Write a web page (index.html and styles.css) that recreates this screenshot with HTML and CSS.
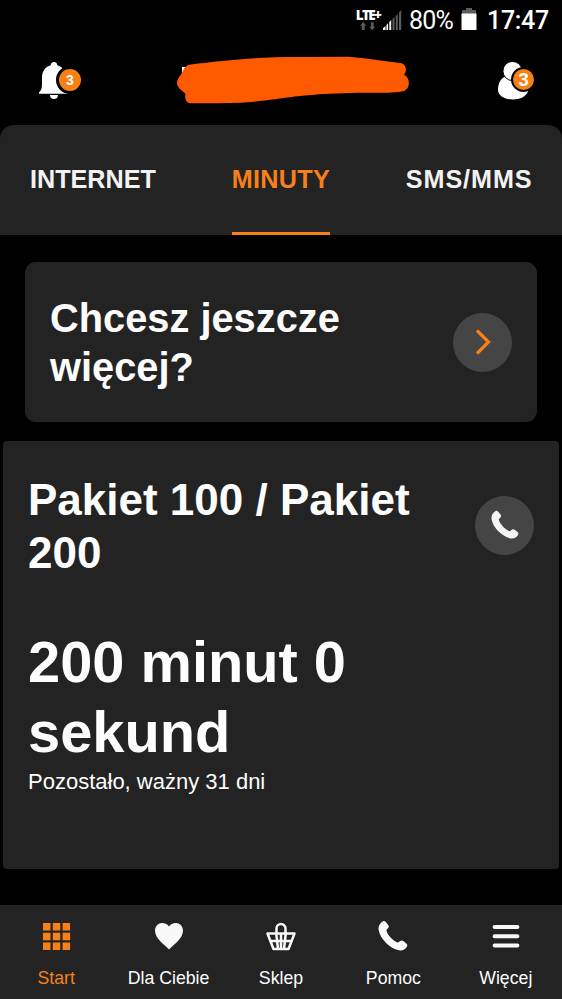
FILE: index.html
```html
<!DOCTYPE html>
<html lang="pl">
<head>
<meta charset="utf-8">
<title>Minuty</title>
<link rel="stylesheet" href="styles.css">
</head>
<body>
<div class="screen">
  <div class="status">
    <div class="network">
      <span class="lte">LTE+</span>
      <svg width="16" height="9" viewBox="0 0 16 9" fill="#5c5c5c"><path d="M3.200 0 6.200 3.500H4.600V8H1.800V3.500H.2zM12.300 8.300 9.300 4.800h1.600V.3h2.800v4.500h1.600z"/></svg>
    </div>
    <svg class="signal" width="22" height="22" viewBox="0 0 22 22"><path fill="#fff" d="M1 21v-2l2.500-2V21zM4.400 21v-5l1.700-1.700V21zM7.300 21v-8l1.900-1.900V21z"/><path fill="#5c5c5c" d="M10.500 21V10l2-2v13zM13.800 21V7l2-2v16zM17 21V3.500L19.200 1v20z"/></svg>
    <span class="percent">80%</span>
    <svg class="battery" width="16" height="24" viewBox="0 0 16 24"><path fill="#5c5c5c" d="M5 1h6v2h4v4H1V3h4z"/><path fill="#fff" d="M.5 6.500h15V23H.5z"/></svg>
    <span class="clock">17:47</span>
  </div>

  <header class="header">
    <div class="alert">
      <svg width="32" height="40" viewBox="0 0 32 40" fill="#fff"><path d="M16 1c2 0 3.500 1.300 3.200 3.200C25 6 28 10 28 17v7c0 3 1 5.500 2.500 7.500v1.200H1v-1.200C3 29.500 4 27 4 24v-7c0-7 3-11 8.800-12.800C12.500 2.300 14 1 16 1zM12 34h8c0 2.500-1.500 4-4 4s-4-1.500-4-4z"/></svg>
      <span class="badge">3</span>
    </div>
    <svg class="name" width="234" height="50" viewBox="0 0 234 50"><path fill="#fff" d="M6 10h6v26l-6-5z"/><path fill="#ff5a00" d="M15 7.500C45 3.500 82 0 120 0L171-.2C190 1 210 4.500 224 6c7 1 7 8 4 12 6 2 7 13 0 16-12 3-35 1-60 2.300C125 37 108 42 75 45c-20 1.500-38 1.200-60 1.200-5 0-6.500-5-5.500-9.200C6 33 1 31 1 26c0-5 4-7 6-12.500 1.500-3 4-6 8-6z"/></svg>
    <div class="user">
      <svg width="34" height="40" viewBox="0 0 34 40" fill="#fff"><path d="M1 29c0-7 3-12 7.500-13.500C11 19.500 20 20 23 16c5 2 8 7 8 14.500-2 5-8 8-15 8-8.500 0-15-4-15-9.500z"/><circle cx="15.500" cy="10" r="9.600" stroke="#000" stroke-width="1"/></svg>
      <span class="badge badge-large">3</span>
    </div>
  </header>

  <nav class="tabs">
    <span class="tab">INTERNET</span>
    <span class="tab active">MINUTY</span>
    <span class="tab messages">SMS/MMS</span>
  </nav>

  <section class="promo">
    <h2>Chcesz jeszcze<br>więcej?</h2>
    <span class="round"><svg width="20" height="30" viewBox="0 0 20 30" fill="none" stroke="#f8801a" stroke-width="3.200"><path d="M4 3.500 15.500 15 4 26.500"/></svg></span>
  </section>

  <main class="package">
    <div class="package-head">
      <h1>Pakiet 100 / Pakiet<br>200</h1>
      <span class="round"><svg width="30" height="30" viewBox="0 0 30 30" fill="#f4f4f4"><use href="#phone"/></svg></span>
    </div>
    <p class="amount">200 minut 0<br>sekund</p>
    <p class="left">Pozostało, ważny 31 dni</p>
  </main>

  <nav class="bottom">
    <a class="item current">
      <svg width="32" height="32" viewBox="0 0 32 32" fill="#f8801a"><path d="M3 3h7.500v7.500H3zM12.800 3h7.500v7.500h-7.500zM22.600 3h7.500v7.500h-7.500zM3 12.800h7.500v7.500H3zM12.800 12.800h7.500v7.500h-7.500zM22.600 12.800h7.500v7.500h-7.500zM3 22.600h7.500v7.500H3zM12.800 22.600h7.500v7.500h-7.500zM22.600 22.600h7.500v7.500h-7.500z"/></svg>
      <span>Start</span>
    </a>
    <a class="item">
      <svg width="32" height="32" viewBox="0 0 32 32" fill="#f8f8f8"><path d="M16 29.500C12 25 2 19 2 10.500 2 6 5.500 3 9 3c3.200 0 5.700 1.300 7 3.500C17.300 4.300 19.800 3 23 3c3.500 0 7 3 7 7.500 0 8.500-10 14.500-14 19z"/></svg>
      <span>Dla Ciebie</span>
    </a>
    <a class="item">
      <svg width="32" height="32" viewBox="0 0 32 32" fill="none" stroke="#f8f8f8" stroke-width="2.500" stroke-linejoin="round"><path d="M2.500 13.500h27L23.500 29h-15zM5.500 21h21M11.300 14l1.700 15M20.700 14 19 29M16 14v15" /><path d="M11.500 13.500V8.500a4.500 4.500 0 0 1 9 0v5"/></svg>
      <span>Sklep</span>
    </a>
    <a class="item">
      <svg width="32" height="32" viewBox="0 0 30 30" fill="#f8f8f8"><path id="phone" d="M5.300 1.300C6.300.6 7.200.8 8 1.600l2.500 3c.8 1 .8 2-.1 2.900L8.800 9.300c.5 4.500 6.400 10.400 11 11.900l2-1.500c1-.7 2-.6 2.900.1l3 2.500c.9.800 1 1.600.3 2.700C26.500 27.500 24 29 20.500 28.400 12 26.500 3.300 18 1.600 9.500 1 5.500 2.700 2.900 5.300 1.300z"/></svg>
      <span>Pomoc</span>
    </a>
    <a class="item">
      <svg width="32" height="32" viewBox="0 0 32 32" stroke="#f8f8f8" stroke-width="4" stroke-linecap="round"><path d="M4.600 7h22.800M4.600 16.300h22.800M4.600 25.600h22.800"/></svg>
      <span>Więcej</span>
    </a>
  </nav>
</div>
</body>
</html>
```
FILE: styles.css
```css
* { box-sizing: border-box; margin: 0; padding: 0; }

body {
  background: #000;
  color: #fdfdfd;
  font-family: "Liberation Sans", sans-serif;
}

.screen {
  width: 562px;
  height: 999px;
  display: flex;
  flex-direction: column;
  overflow: hidden;
  background: #000;
}

.status {
  height: 40px;
  padding-right: 13px;
  display: flex;
  align-items: center;
  justify-content: flex-end;
  font-family: Roboto, sans-serif;
  font-size: 25px;
}

.network {
  width: 24px;
  margin-right: 2px;
  display: flex;
  flex-direction: column;
  align-items: center;
}

.lte {
  font: 800 13.500px/13px "Open Sans", sans-serif;
  letter-spacing: -1.600px;
}

.signal { margin-right: 5px; }
.percent { width: 46px; letter-spacing: -.8px; }
.battery { margin: -2px 10px 0 6px; }
.clock { width: 62px; font-weight: 500; letter-spacing: -.3px; }

.header {
  height: 85px;
  padding: 17px 25px 0 38px;
  display: flex;
  align-items: flex-start;
  justify-content: space-between;
}

.alert, .user { position: relative; }
.alert { padding-top: 4px; width: 44px; }
.user { padding-top: 4px; width: 40px; }
.name { overflow: visible; margin-left: 7px; }

.badge {
  position: absolute;
  left: 18px;
  top: 9px;
  width: 28px;
  height: 28px;
  border: 3px solid #000;
  border-radius: 50%;
  background: #f98012;
  font: bold 14px/22px "Liberation Sans", sans-serif;
  text-align: center;
}

.badge-large {
  left: 14px;
  top: 10px;
  width: 25px;
  height: 25px;
  border-width: 2px;
  font-size: 19px;
}

.tabs {
  height: 110px;
  padding: 0 30px;
  display: flex;
  justify-content: space-between;
  border-radius: 14px 14px 0 0;
  background: #232323;
}

.tab {
  border-bottom: 3px solid transparent;
  font-size: 25.200px;
  font-weight: bold;
  line-height: 109px;
  color: #f2f2f2;
}

.tab.active { color: #f8801a; border-color: #f8801a; letter-spacing: .3px; }
.tab.messages { letter-spacing: .9px; margin-right: -.5px; }

.promo {
  height: 160px;
  margin: 27px 25px 19px;
  padding: 0 25px;
  display: flex;
  align-items: center;
  justify-content: space-between;
  border-radius: 11px;
  background: #232323;
}

.promo h2 { padding-top: 2px; font-size: 39.800px; line-height: 49px; }

.round {
  width: 59px;
  height: 59px;
  flex: none;
  display: flex;
  align-items: center;
  justify-content: center;
  border-radius: 50%;
  background: #454545;
}

.package {
  height: 428px;
  margin: 0 3px;
  padding: 32px 25px 0;
  border-radius: 4px;
  background: #232323;
}

.package-head { display: flex; align-items: center; justify-content: space-between; }
.package-head .round { margin-bottom: 2px; }
.package h1 { font-size: 44px; line-height: 53px; white-space: nowrap; }
.amount { margin-top: 48px; font-size: 57.800px; font-weight: bold; line-height: 70px; }
.left { font-size: 22px; line-height: 30px; }

.bottom {
  margin-top: auto;
  height: 94px;
  display: grid;
  grid-template-columns: repeat(5, 1fr);
  background: #232323;
}

.item {
  padding-top: 15px;
  display: flex;
  flex-direction: column;
  align-items: center;
  font-size: 17.700px;
  line-height: 22px;
}

.item span { margin-top: 15px; }
.current { color: #f8801a; }
```
